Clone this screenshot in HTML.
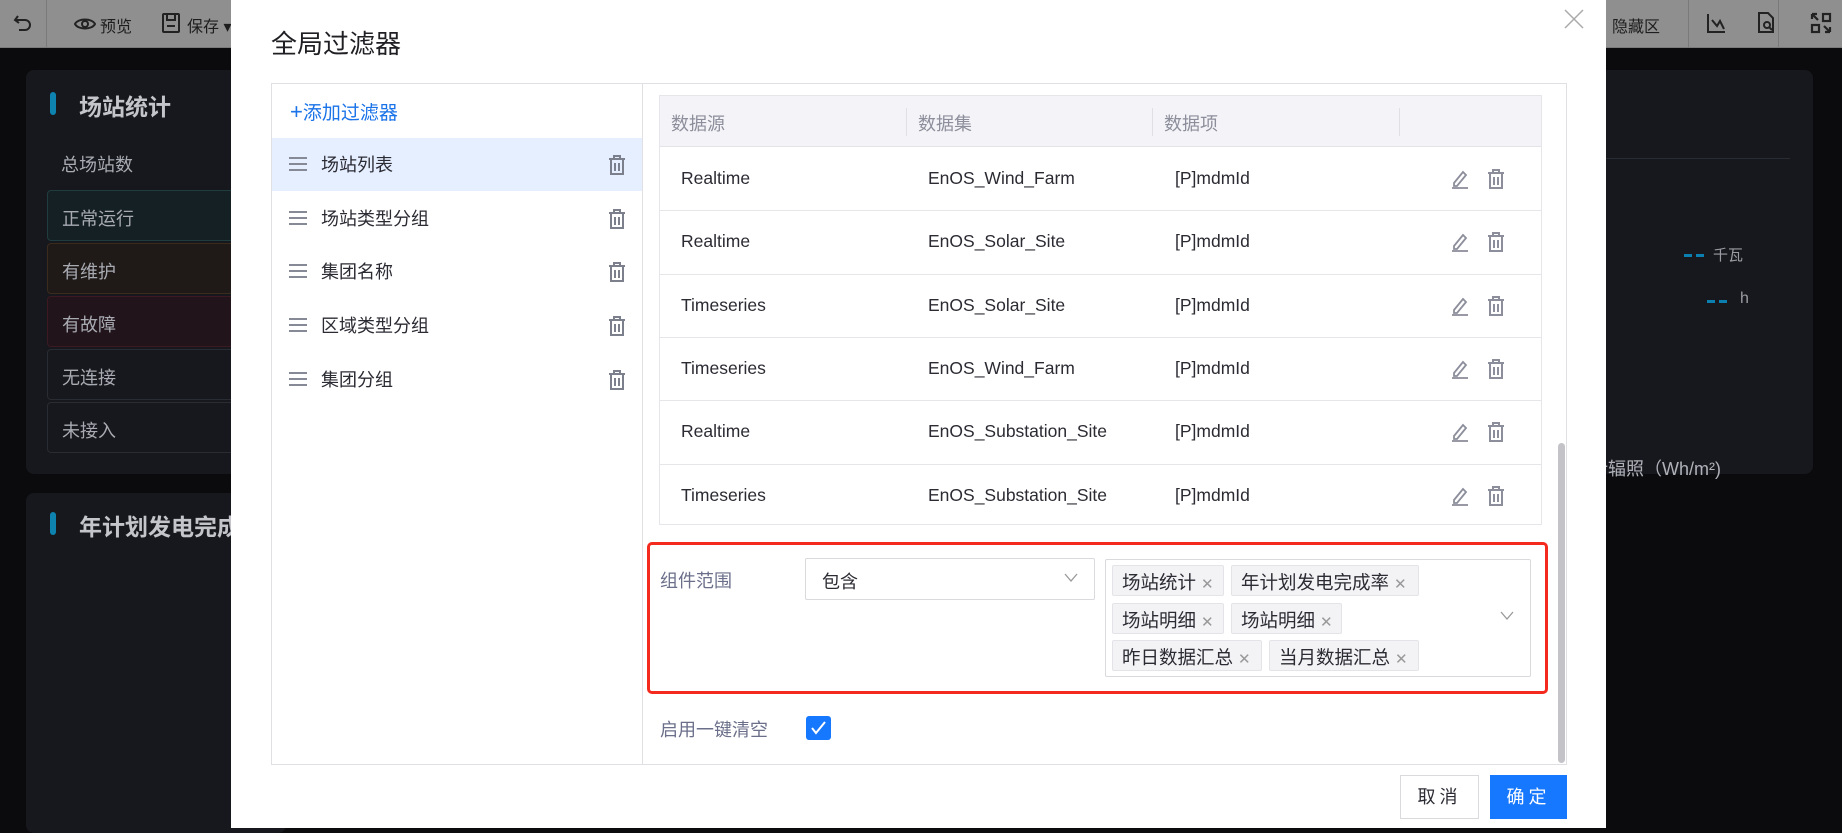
<!DOCTYPE html>
<html><head><meta charset="utf-8"><style>
*{box-sizing:border-box;margin:0;padding:0}
body{width:1842px;height:828px;overflow:hidden;position:relative;background:#0b0b0d;font-family:"Liberation Sans","Noto Sans CJK SC",sans-serif}
.a{position:absolute}
.tb{left:0;top:0;width:1842px;height:48px;background:#8f8f90;border-bottom:1px solid #7a7a7a}
.tbt{font-size:16px;color:#1d1d1d}
.pan{background:#17181d;border-radius:8px}
.st{left:47px;width:240px;height:51px;border-radius:4px;border:1px solid #2a2c33;color:#a9abb3;font-size:18px;padding:14px 0 0 14px}
.modal{left:231px;top:0;width:1375px;height:828px;background:#fff}
.cn{font-size:18px;color:#2b2b33}
.li{left:272px;width:370px;height:53px}
.li .h{position:absolute;left:17px;top:19px;width:18px;height:14px;border-top:2px solid #868a96;border-bottom:2px solid #868a96}
.li .h:after{content:"";position:absolute;left:0;top:4px;width:18px;height:2px;background:#868a96}
.li .t{position:absolute;left:49px;top:13px;font-size:18px;color:#2b2b33}
.li svg{position:absolute;left:336px;top:17px}
.hd{font-size:18px;color:#8c8e9b}
.cell{font-size:17.5px;color:#2b2b33}
.tag{height:31px;background:#f3f3f6;border:1px solid #e3e3e8;border-radius:2px;font-size:18.5px;color:#2b2b33;padding:3px 0 0 9px;white-space:nowrap}
.tag i{font-style:normal;color:#999;font-size:15px;margin-left:5px}
</style></head><body>
<div class="a tb"></div>
<svg class="a" style="left:12px;top:12px" width="22" height="22" viewBox="0 0 22 22" fill="none" stroke="#222" stroke-width="2"><path d="M6 4L3 8l4 3"/><path d="M3 8h10a5 5 0 0 1 0 10H7"/></svg>
<div class="a" style="left:46px;top:0;width:1px;height:48px;background:#7a7a7a"></div>
<svg class="a" style="left:74px;top:13px" width="22" height="22" viewBox="0 0 22 22" fill="none" stroke="#222" stroke-width="2"><path d="M1 11c3-6 17-6 20 0c-3 6-17 6-20 0z"/><circle cx="11" cy="11" r="3"/></svg>
<div class="a tbt" style="left:100px;top:13px">预览</div>
<svg class="a" style="left:161px;top:12px" width="20" height="22" viewBox="0 0 20 22" fill="none" stroke="#222" stroke-width="2"><rect x="2" y="2" width="16" height="18" rx="1"/><path d="M6 2v6h8V2M6 14h8"/></svg>
<div class="a tbt" style="left:187px;top:13px">保存 ▾</div>
<div class="a tbt" style="left:1612px;top:13px">隐藏区</div>
<div class="a" style="left:1688px;top:0;width:1px;height:48px;background:#7a7a7a"></div>
<div class="a" style="left:1778px;top:0;width:1px;height:48px;background:#7a7a7a"></div>
<svg class="a" style="left:1705px;top:12px" width="22" height="22" fill="none" stroke="#222" stroke-width="2"><path d="M3 2v18h17M7 8l5 6 3-5 4 8"/></svg>
<svg class="a" style="left:1756px;top:11px" width="20" height="24" fill="none" stroke="#222" stroke-width="2"><path d="M3 2h9l5 5v14H3z"/><circle cx="11" cy="14" r="3"/><path d="M13 16l3 3"/></svg>
<svg class="a" style="left:1810px;top:12px" width="22" height="22" fill="none" stroke="#222" stroke-width="2.2"><path d="M2 2l6 6M2 2v5M2 2h5"/><rect x="13" y="2" width="7" height="7"/><rect x="2" y="13" width="7" height="7"/><path d="M20 20l-6-6M20 20v-5M20 20h-5"/></svg>
<div class="a pan" style="left:26px;top:70px;width:260px;height:404px"></div>
<div class="a" style="left:50px;top:92px;width:6px;height:23px;border-radius:3px;background:#0e83b0"></div>
<div class="a" style="left:79px;top:88px;font-size:23px;font-weight:bold;color:#c4c5cb">场站统计</div>
<div class="a" style="left:61px;top:151px;font-size:18px;color:#a9abb3">总场站数</div>
<div class="a st" style="top:190px;background:#152024;border-color:#1f3d3e">正常运行</div>
<div class="a st" style="top:243px;background:#1f1a18;border-color:#3a2c1d">有维护</div>
<div class="a st" style="top:296px;background:#21141a;border-color:#3d1a22">有故障</div>
<div class="a st" style="top:349px">无连接</div>
<div class="a st" style="top:402px">未接入</div>
<div class="a pan" style="left:26px;top:493px;width:260px;height:340px"></div>
<div class="a" style="left:50px;top:512px;width:6px;height:23px;border-radius:3px;background:#0e83b0"></div>
<div class="a" style="left:79px;top:508px;font-size:23px;font-weight:bold;color:#c4c5cb">年计划发电完成</div>
<div class="a pan" style="left:1560px;top:70px;width:253px;height:404px"></div>
<div class="a" style="left:1600px;top:158px;width:190px;height:1px;background:#2a2c33"></div>
<div class="a" style="left:1684px;top:254px;width:20px;height:3px;background:repeating-linear-gradient(90deg,#0a7fb0 0 8px,transparent 8px 12px)"></div>
<div class="a" style="left:1713px;top:244px;font-size:15px;color:#9a9ca4">千瓦</div>
<div class="a" style="left:1707px;top:300px;width:20px;height:3px;background:repeating-linear-gradient(90deg,#0a7fb0 0 8px,transparent 8px 12px)"></div>
<div class="a" style="left:1740px;top:290px;font-size:16px;color:#9a9ca4">h</div>
<div class="a" style="left:1590px;top:455px;font-size:18px;color:#b0b2ba">计辐照（Wh/m²)</div>
<div class="a modal"></div>
<div class="a" style="left:271px;top:24px;font-size:26px;color:#1f1f24">全局过滤器</div>
<svg class="a" style="left:1564px;top:9px" width="20" height="20" stroke="#aaa" stroke-width="1.5"><path d="M1 1l18 18M19 1L1 19"/></svg>
<div class="a" style="left:271px;top:83px;width:1296px;height:682px;border:1px solid #e0e0e4"></div>
<div class="a" style="left:642px;top:83px;width:1px;height:682px;background:#e0e0e4"></div>
<div class="a" style="left:290px;top:98px;font-size:19px;color:#1a73e8"><span style="font-size:22px">+</span>添加过滤器</div>
<div class="a" style="left:272px;top:138px;width:370px;height:53px;background:#e6efff"></div>
<div class="a li" style="top:138px"><div class="h"></div><div class="t">场站列表</div><svg width="18" height="20" fill="none" stroke="#7c808c" stroke-width="2"><path d="M1 4h16M6 4V1h6v3M3 4v15h12V4M7 8v8M11 8v8"/></svg></div>
<div class="a li" style="top:192px"><div class="h"></div><div class="t">场站类型分组</div><svg width="18" height="20" fill="none" stroke="#7c808c" stroke-width="2"><path d="M1 4h16M6 4V1h6v3M3 4v15h12V4M7 8v8M11 8v8"/></svg></div>
<div class="a li" style="top:245px"><div class="h"></div><div class="t">集团名称</div><svg width="18" height="20" fill="none" stroke="#7c808c" stroke-width="2"><path d="M1 4h16M6 4V1h6v3M3 4v15h12V4M7 8v8M11 8v8"/></svg></div>
<div class="a li" style="top:299px"><div class="h"></div><div class="t">区域类型分组</div><svg width="18" height="20" fill="none" stroke="#7c808c" stroke-width="2"><path d="M1 4h16M6 4V1h6v3M3 4v15h12V4M7 8v8M11 8v8"/></svg></div>
<div class="a li" style="top:353px"><div class="h"></div><div class="t">集团分组</div><svg width="18" height="20" fill="none" stroke="#7c808c" stroke-width="2"><path d="M1 4h16M6 4V1h6v3M3 4v15h12V4M7 8v8M11 8v8"/></svg></div>
<div class="a" style="left:659px;top:95px;width:883px;height:430px;border:1px solid #e6e6ea"></div>
<div class="a" style="left:660px;top:96px;width:881px;height:51px;background:#f4f4f8;border-bottom:1px solid #e3e3e8"></div>
<div class="a" style="left:906px;top:108px;width:1px;height:28px;background:#dfdfe4"></div>
<div class="a" style="left:1152px;top:108px;width:1px;height:28px;background:#dfdfe4"></div>
<div class="a" style="left:1399px;top:108px;width:1px;height:28px;background:#dfdfe4"></div>
<div class="a hd" style="left:671px;top:110px">数据源</div>
<div class="a hd" style="left:918px;top:110px">数据集</div>
<div class="a hd" style="left:1164px;top:110px">数据项</div>
<div id="rows"></div>
<div class="a" style="left:1558px;top:443px;width:7px;height:320px;border-radius:4px;background:#c4c4c8"></div>
<div class="a" style="left:647px;top:542px;width:901px;height:152px;border:3px solid #f42a1f;border-radius:5px"></div>
<div class="a" style="left:660px;top:567px;font-size:18px;color:#6b6f8a">组件范围</div>
<div class="a" style="left:805px;top:558px;width:290px;height:42px;border:1px solid #d9d9de;border-radius:2px"></div>
<div class="a cn" style="left:822px;top:568px">包含</div>
<svg class="a" style="left:1064px;top:573px" width="14" height="10" fill="none" stroke="#999" stroke-width="1.3"><path d="M1 1l6 7 6-7"/></svg>
<div class="a" style="left:1105px;top:559px;width:426px;height:118px;border:1px solid #d9d9de;border-radius:2px"></div>
<div class="a tag" style="left:1112px;top:565px;width:112px">场站统计<i>✕</i></div>
<div class="a tag" style="left:1231px;top:565px;width:188px">年计划发电完成率<i>✕</i></div>
<div class="a tag" style="left:1112px;top:603px;width:112px">场站明细<i>✕</i></div>
<div class="a tag" style="left:1231px;top:603px;width:111px">场站明细<i>✕</i></div>
<div class="a tag" style="left:1112px;top:640px;width:150px">昨日数据汇总<i>✕</i></div>
<div class="a tag" style="left:1269px;top:640px;width:150px">当月数据汇总<i>✕</i></div>
<svg class="a" style="left:1500px;top:611px" width="14" height="10" fill="none" stroke="#999" stroke-width="1.3"><path d="M1 1l6 7 6-7"/></svg>
<div class="a" style="left:660px;top:716px;font-size:18px;color:#6b6f8a">启用一键清空</div>
<div class="a" style="left:806px;top:716px;width:25px;height:24px;border-radius:3px;background:#1677ff"></div>
<svg class="a" style="left:810px;top:720px" width="17" height="16" fill="none" stroke="#fff" stroke-width="2"><path d="M2 8l4 5 9-11"/></svg>
<div class="a" style="left:1400px;top:775px;width:79px;height:44px;border:1px solid #d9d9de;font-size:18px;color:#2b2b33;text-align:center;line-height:42px;letter-spacing:4px">取消</div>
<div class="a" style="left:1490px;top:775px;width:77px;height:44px;background:#1677ff;font-size:18px;color:#fff;text-align:center;line-height:44px;letter-spacing:4px">确定</div>
<script>
var d=[["Realtime","EnOS_Wind_Farm"],["Realtime","EnOS_Solar_Site"],["Timeseries","EnOS_Solar_Site"],["Timeseries","EnOS_Wind_Farm"],["Realtime","EnOS_Substation_Site"],["Timeseries","EnOS_Substation_Site"]];
var h="",y=147;
d.forEach(function(r,i){var top=y+i*63.3;
if(i>0)h+='<div class="a" style="left:660px;top:'+top+'px;width:881px;height:1px;background:#e6e6ea"></div>';
var ty=top+21;
h+='<div class="a cell" style="left:681px;top:'+ty+'px">'+r[0]+'</div><div class="a cell" style="left:928px;top:'+ty+'px">'+r[1]+'</div><div class="a cell" style="left:1175px;top:'+ty+'px">[P]mdmId</div>';
h+='<svg class="a" style="left:1450px;top:'+(top+22)+'px" width="20" height="20" fill="none" stroke="#8c8e9b" stroke-width="1.8"><path d="M4 14l9-11 3 3-9 11H4z"/><path d="M2 19h16"/></svg>';
h+='<svg class="a" style="left:1487px;top:'+(top+22)+'px" width="18" height="20" fill="none" stroke="#8c8e9b" stroke-width="2"><path d="M1 4h16M6 4V1h6v3M3 4v15h12V4M7 8v8M11 8v8"/></svg>';});
document.getElementById("rows").innerHTML=h;
</script>
</body></html>
